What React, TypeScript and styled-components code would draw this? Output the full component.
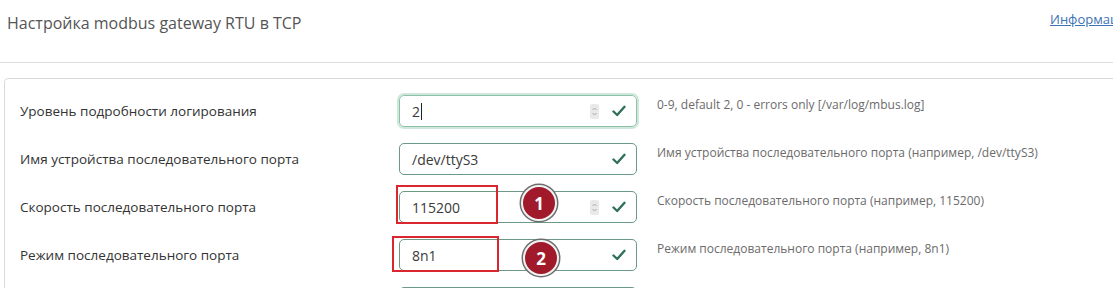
import React from 'react'
import styled, { createGlobalStyle, css } from 'styled-components'

const GlobalStyle = createGlobalStyle`
  html, body {
    margin: 0;
    padding: 0;
    background: #fff;
    overflow: hidden;
  }
  body {
    font-family: "Open Sans", "Noto Sans", "DejaVu Sans", sans-serif;
    color: #333;
  }
`

interface Row {
  label: string
  value: string
  help: string
  spinner?: boolean
  focused?: boolean
  mark?: { n: number; box: [number, number, number, number]; dot: [number, number] }
}

const rows: Row[] = [
  {
    label: 'Уровень подробности логирования',
    value: '2',
    help: '0-9, default 2, 0 - errors only [/var/log/mbus.log]',
    spinner: true,
    focused: true,
  },
  {
    label: 'Имя устройства последовательного порта',
    value: '/dev/ttyS3',
    help: 'Имя устройства последовательного порта (например, /dev/ttyS3)',
  },
  {
    label: 'Скорость последовательного порта',
    value: '115200',
    help: 'Скорость последовательного порта (например, 115200)',
    spinner: true,
    mark: { n: 1, box: [-3, -6, 102, 39], dot: [122, -6] },
  },
  {
    label: 'Режим последовательного порта',
    value: '8n1',
    help: 'Режим последовательного порта (например, 8n1)',
    mark: { n: 2, box: [-7, -3, 107, 36], dot: [124, 1] },
  },
  // next row only shows the top of its field in the view
  { label: '', value: '', help: '' },
]

const Page = styled.div`
  width: 1113px;
  height: 288px;
  overflow: hidden;
`

const Header = styled.div`
  display: grid;
  grid-template-columns: 1043px max-content;
  align-items: center;
  padding: 13px 0 0 7px;
  height: 19px;
`

const Title = styled.h1`
  margin: 0;
  font-size: 16px;
  font-weight: 400;
  line-height: 20px;
  color: #555;
  white-space: nowrap;
`

const InfoLink = styled.a`
  font-size: 13px;
  color: #3d72b4;
  text-decoration: underline;
  white-space: nowrap;
  margin-top: -8px;
`

const Divider = styled.div`
  margin-top: 30px;
  width: 1113px;
  height: 1px;
  background: #dcdcdc;
`

const Card = styled.div`
  margin: 15px 0 0 4px;
  width: 1180px;
  border: 1px solid #dadada;
  border-radius: 4px;
  padding: 16px 15px;
  display: grid;
  grid-template-columns: 359px 238px 1fr;
  column-gap: 20px;
  row-gap: 16px;
`

const Label = styled.div`
  font-size: 13.5px;
  line-height: 32px;
  color: #333;
  white-space: nowrap;
`

const Field = styled.div<{ $focused?: boolean }>`
  position: relative;
  height: 32px;
  box-sizing: border-box;
  border: 1px solid #6c9886;
  border-radius: 5px;
  display: flex;
  align-items: center;
  padding: 0 10px 0 12px;
  font-size: 14px;
  color: #3a3a3a;
  ${(p) =>
    p.$focused &&
    css`
      border-color: #8cc2a8;
      box-shadow: 0 0 0 2px rgba(120, 190, 155, 0.35);
    `}
`

const Value = styled.span`
  flex: 1;
  white-space: nowrap;
`

const Caret = styled.span`
  display: inline-block;
  width: 1px;
  height: 17px;
  background: #222;
  vertical-align: -3px;
  margin-left: 1px;
`

const Spinner = styled.span`
  width: 9px;
  height: 15px;
  border-radius: 2px;
  background: #e9e9e9;
  margin-right: 13px;
  display: flex;
  align-items: center;
  justify-content: center;
`

const Help = styled.div`
  font-size: 12px;
  line-height: 18px;
  padding-top: 1px;
  color: #6b6b6b;
  white-space: nowrap;
`

const MarkBox = styled.div`
  position: absolute;
  border: 2px solid #d9262f;
  box-sizing: border-box;
`

const Badge = styled.div`
  position: absolute;
  width: 36px;
  height: 36px;
  box-sizing: border-box;
  border-radius: 50%;
  background: #a11a2c;
  border: 2px solid #f3f3f3;
  box-shadow: 0 0 0 1.5px #6d6d6d;
  color: #fff;
  font-family: "Open Sans", sans-serif;
  font-weight: 700;
  font-size: 17px;
  display: flex;
  align-items: center;
  justify-content: center;
`

const Check = () => (
  <svg width="14" height="12" viewBox="0 0 14 12">
    <path d="M1.5 6.5 L5.2 10 L12.5 1.8" fill="none" stroke="#2f7257" strokeWidth="2.4" strokeLinecap="round" strokeLinejoin="round" />
  </svg>
)

const Arrows = () => (
  <svg width="7" height="11" viewBox="0 0 7 11">
    <path d="M1.5 4 L3.5 2 L5.5 4 M1.5 7 L3.5 9 L5.5 7" fill="none" stroke="#a9a9a9" strokeWidth="1" />
  </svg>
)

const App: React.FC = () => {
  return (
    <Page>
      <GlobalStyle />
      <Header>
        <Title>Настройка modbus gateway RTU в TCP</Title>
        <InfoLink href="#">Информация</InfoLink>
      </Header>
      <Divider />
      <Card>
        {rows.map((r, i) => (
          <React.Fragment key={i}>
            <Label>{r.label}</Label>
            <Field $focused={r.focused}>
              <Value>
                {r.value}
                {r.focused && <Caret />}
              </Value>
              {r.spinner && (
                <Spinner>
                  <Arrows />
                </Spinner>
              )}
              {r.value && <Check />}
              {r.mark && (
                <>
                  <MarkBox
                    style={{
                      left: r.mark.box[0] - 1,
                      top: r.mark.box[1] - 1,
                      width: r.mark.box[2],
                      height: r.mark.box[3],
                    }}
                  />
                  <Badge style={{ left: r.mark.dot[0] - 1, top: r.mark.dot[1] - 1 }}>{r.mark.n}</Badge>
                </>
              )}
            </Field>
            <Help>{r.help}</Help>
          </React.Fragment>
        ))}
      </Card>
    </Page>
  )
}

export default App
